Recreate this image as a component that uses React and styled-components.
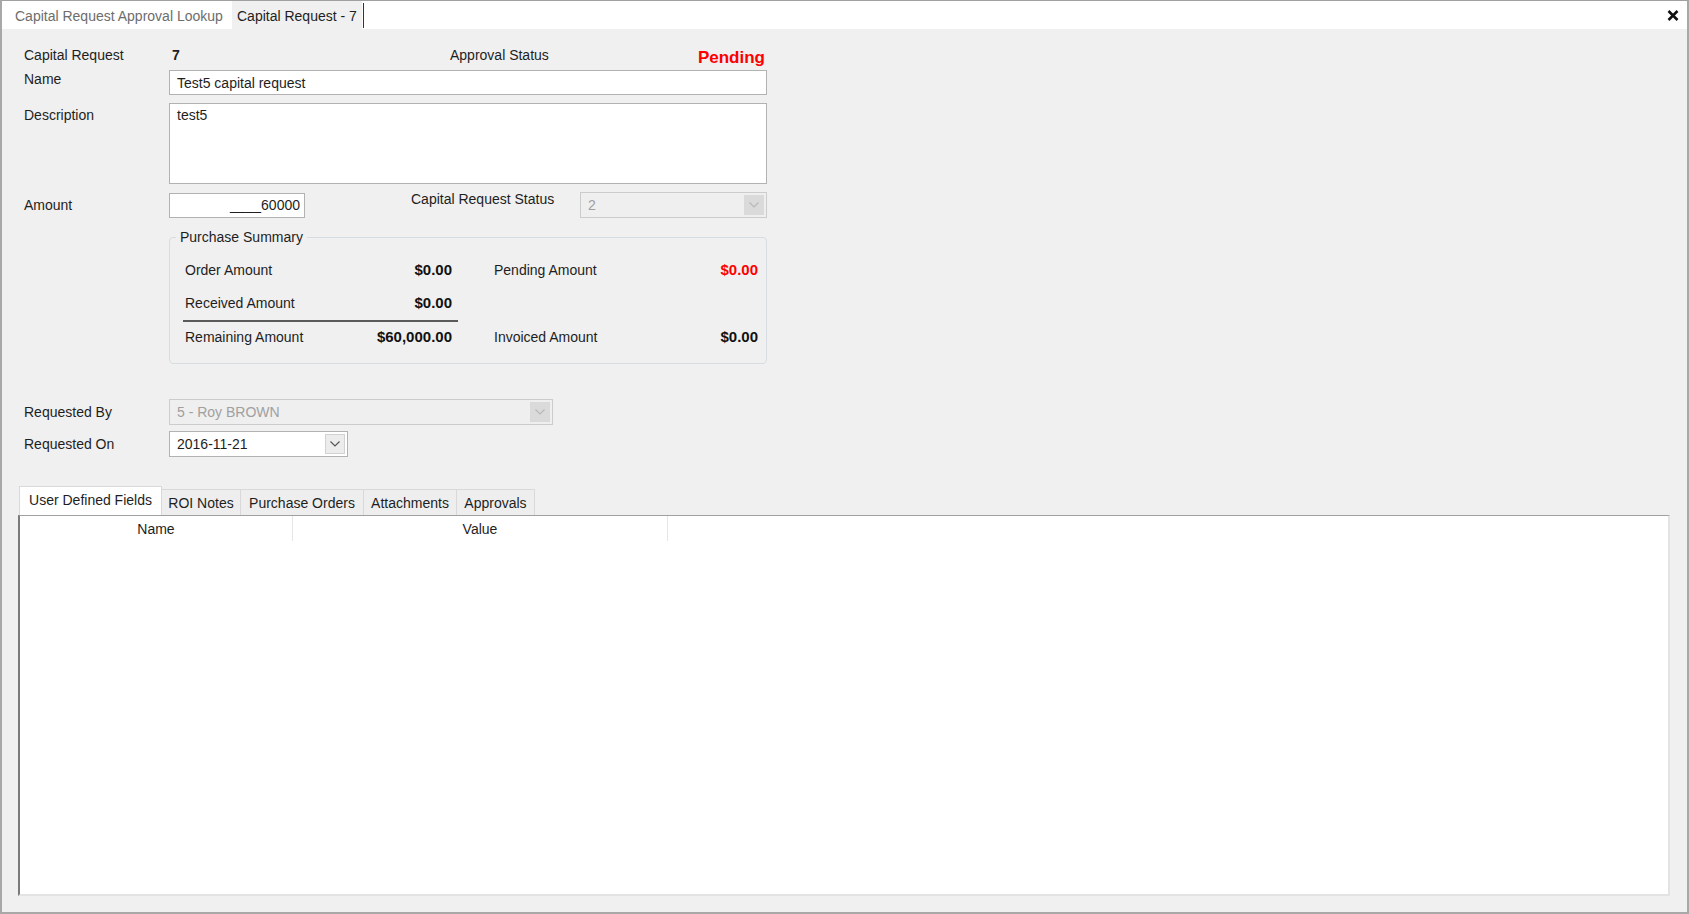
import styled, { createGlobalStyle } from "styled-components";

const GlobalStyle = createGlobalStyle`
  html, body { margin: 0; padding: 0; background: #f0f0f0; }
  * { box-sizing: border-box; }
`;

const summary = {
  left: [
    { label: "Order Amount", value: "$0.00" },
    { label: "Received Amount", value: "$0.00" },
  ],
  right: [
    { label: "Pending Amount", value: "$0.00", red: true },
    { label: "", value: "" },
  ],
};

const tabs = [
  { name: "User Defined Fields", width: 143, active: true },
  { name: "ROI Notes", width: 79 },
  { name: "Purchase Orders", width: 123 },
  { name: "Attachments", width: 93 },
  { name: "Approvals", width: 78 },
];

function Chevron({ color }) {
  return (
    <svg width="10" height="6" viewBox="0 0 10 6">
      <path d="M0.5 0.5 L5 5 L9.5 0.5" fill="none" stroke={color} strokeWidth="1.2" />
    </svg>
  );
}

export default function App() {
  return (
    <Window>
      <GlobalStyle />
      <DocStrip>
        <DocTab $width={230}>Capital Request Approval Lookup</DocTab>
        <DocTab $active $width={130}>Capital Request - 7</DocTab>
        <Caret />
        <CloseBtn>
          <svg width="12" height="11" viewBox="0 0 12 11">
            <path d="M1.5 1 L10.5 10 M10.5 1 L1.5 10" stroke="#111" strokeWidth="2.6" />
          </svg>
        </CloseBtn>
      </DocStrip>

      <Body>
        <Form>
          <HeadRow>
            <Label>Capital Request</Label>
            <IdValue>7</IdValue>
            <span>Approval Status</span>
            <Pending>Pending</Pending>
          </HeadRow>

          <Row $top={3}>
            <Label $pad={1}>Name</Label>
            <TextBox $w={598}>Test5 capital request</TextBox>
          </Row>

          <Row $top={8}>
            <Label $pad={4}>Description</Label>
            <TextArea>test5</TextArea>
          </Row>

          <Row $top={8} $center>
            <Label>Amount</Label>
            <TextBox $w={136} $right>____60000</TextBox>
            <StatusLabel>Capital Request Status</StatusLabel>
            <Combo $w={187} $disabled>
              <span>2</span>
              <ComboButton $disabled>
                <Chevron color="#b8b8b8" />
              </ComboButton>
            </Combo>
          </Row>

          <Group>
            <Legend>Purchase Summary</Legend>
            <SummaryRow>
              <Pair>
                <span>{summary.left[0].label}</span>
                <Money>{summary.left[0].value}</Money>
              </Pair>
              <Pair>
                <span>{summary.right[0].label}</span>
                <Money $red>{summary.right[0].value}</Money>
              </Pair>
            </SummaryRow>
            <SummaryRow $top={13}>
              <Pair>
                <span>{summary.left[1].label}</span>
                <Money>{summary.left[1].value}</Money>
              </Pair>
              <Pair />
            </SummaryRow>
            <Divider />
            <SummaryRow $top={5}>
              <Pair>
                <span>Remaining Amount</span>
                <Money>$60,000.00</Money>
              </Pair>
              <Pair>
                <span>Invoiced Amount</span>
                <Money>$0.00</Money>
              </Pair>
            </SummaryRow>
          </Group>

          <Row $top={35} $center>
            <Label>Requested By</Label>
            <Combo $w={384} $disabled>
              <span>5 - Roy BROWN</span>
              <ComboButton $disabled>
                <Chevron color="#b8b8b8" />
              </ComboButton>
            </Combo>
          </Row>

          <Row $top={6} $center>
            <Label>Requested On</Label>
            <Combo $w={179}>
              <span>2016-11-21</span>
              <ComboButton>
                <Chevron color="#555" />
              </ComboButton>
            </Combo>
          </Row>
        </Form>

        <TabBar>
          {tabs.map((t) => (
            <Tab key={t.name} $active={t.active} $w={t.width}>
              {t.name}
            </Tab>
          ))}
        </TabBar>

        <Panel>
          <HeaderRow>
            <HeaderCell $w={273}>Name</HeaderCell>
            <HeaderCell $w={375}>Value</HeaderCell>
          </HeaderRow>
        </Panel>
      </Body>
    </Window>
  );
}

const Window = styled.div`
  width: 1689px;
  height: 914px;
  display: flex;
  flex-direction: column;
  background: #f0f0f0;
  border-top: 1px solid #a0a0a0;
  border-left: 2px solid #a8a8a8;
  border-right: 2px solid #a8a8a8;
  border-bottom: 2px solid #a8a8a8;
  font-family: "Liberation Sans", Arial, sans-serif;
  font-size: 14px;
  line-height: 16px;
  color: #1e1e1e;
`;

const DocStrip = styled.div`
  height: 28px;
  display: flex;
  align-items: stretch;
  background: #ffffff;
`;

const DocTab = styled.div`
  width: ${(p) => p.$width}px;
  display: flex;
  align-items: center;
  padding-left: ${(p) => (p.$active ? 5 : 13)}px;
  padding-top: 2px;
  background: ${(p) => (p.$active ? "#f0f0f0" : "#ffffff")};
  color: ${(p) => (p.$active ? "#1e1e1e" : "#6d6d6d")};
  white-space: nowrap;
`;

const Caret = styled.div`
  width: 1px;
  height: 25px;
  align-self: center;
  background: #333;
  margin-left: 1px;
`;

const CloseBtn = styled.div`
  margin-left: auto;
  width: 28px;
  display: flex;
  align-items: center;
  justify-content: center;
  padding-top: 1px;
`;

const Body = styled.div`
  flex: 1;
  display: flex;
  flex-direction: column;
  padding: 18px 17px 16px 16px;
`;

const Form = styled.div`
  padding-left: 6px;
  display: flex;
  flex-direction: column;
`;

const HeadRow = styled.div`
  width: 743px;
  height: 20px;
  display: flex;
  align-items: flex-start;
`;

const Label = styled.div`
  width: 145px;
  flex-shrink: 0;
  padding-top: ${(p) => p.$pad || 0}px;
`;

const IdValue = styled.div`
  width: 281px;
  padding-left: 3px;
  font-weight: 700;
`;

const Pending = styled.div`
  margin-left: auto;
  margin-right: 2px;
  color: #ff0000;
  font-weight: 700;
  font-size: 17px;
  line-height: 20px;
  padding-top: 1px;
`;

const Row = styled.div`
  display: flex;
  align-items: ${(p) => (p.$center ? "center" : "flex-start")};
  margin-top: ${(p) => p.$top}px;
`;

const TextBox = styled.div`
  width: ${(p) => p.$w}px;
  height: 25px;
  background: #ffffff;
  border: 1px solid #b2b2b2;
  padding: 0 ${(p) => (p.$right ? 4 : 0)}px 0 ${(p) => (p.$right ? 0 : 7)}px;
  display: flex;
  align-items: center;
  justify-content: ${(p) => (p.$right ? "flex-end" : "flex-start")};
  white-space: nowrap;
`;

const TextArea = styled.div`
  width: 598px;
  height: 81px;
  background: #ffffff;
  border: 1px solid #b2b2b2;
  padding: 3px 7px;
`;

const StatusLabel = styled.div`
  width: 169px;
  margin-left: 106px;
  align-self: flex-start;
  margin-top: -1px;
`;

const Combo = styled.div`
  width: ${(p) => p.$w}px;
  height: 26px;
  display: flex;
  align-items: center;
  justify-content: space-between;
  padding: 2px 2px 2px 7px;
  background: ${(p) => (p.$disabled ? "#efefef" : "#ffffff")};
  border: 1px solid ${(p) => (p.$disabled ? "#cccccc" : "#b2b2b2")};
  color: ${(p) => (p.$disabled ? "#a0a0a0" : "#1e1e1e")};
`;

const ComboButton = styled.div`
  width: 20px;
  height: 20px;
  display: flex;
  align-items: center;
  justify-content: center;
  background: ${(p) => (p.$disabled ? "#dadada" : "#ececec")};
  border: 1px solid ${(p) => (p.$disabled ? "#dadada" : "#d2d2d2")};
`;

const Group = styled.fieldset`
  width: 598px;
  margin: 11px 0 0 145px;
  padding: 15px 8px 16px 15px;
  border: 1px solid #d6dde2;
  border-radius: 4px;
`;

const Legend = styled.legend`
  margin-left: -9px;
  padding: 0 4px;
  line-height: 16px;
`;

const SummaryRow = styled.div`
  display: grid;
  grid-template-columns: 267px 264px;
  column-gap: 42px;
  margin-top: ${(p) => p.$top || 0}px;
  line-height: 20px;
`;

const Pair = styled.div`
  display: flex;
  justify-content: space-between;
  align-items: center;
`;

const Money = styled.span`
  font-weight: 700;
  font-size: 15px;
  color: ${(p) => (p.$red ? "#ff0000" : "#111")};
`;

const Divider = styled.div`
  width: 275px;
  height: 2px;
  margin: 7px 0 0 -2px;
  background: #5a5a5a;
`;

const TabBar = styled.div`
  display: flex;
  align-items: flex-end;
  height: 29px;
  margin-top: 29px;
  padding-left: 1px;
`;

const Tab = styled.div`
  width: ${(p) => p.$w}px;
  height: ${(p) => (p.$active ? 29 : 26)}px;
  display: flex;
  align-items: center;
  justify-content: center;
  padding-bottom: ${(p) => (p.$active ? 3 : 0)}px;
  background: ${(p) => (p.$active ? "#ffffff" : "#eeeeee")};
  border: 1px solid #d9d9d9;
  border-bottom: none;
  border-left-width: ${(p) => (p.$active ? 1 : 0)}px;
  white-space: nowrap;
`;

const Panel = styled.div`
  flex: 1;
  background: #ffffff;
  border-top: 1px solid #a0a0a0;
  border-left: 2px solid #7a7a7a;
  border-right: 2px solid #e3e3e3;
  border-bottom: 2px solid #e3e3e3;
`;

const HeaderRow = styled.div`
  display: flex;
  height: 25px;
`;

const HeaderCell = styled.div`
  width: ${(p) => p.$w}px;
  display: flex;
  align-items: center;
  justify-content: center;
  border-right: 1px solid #e5e5e5;
`;
